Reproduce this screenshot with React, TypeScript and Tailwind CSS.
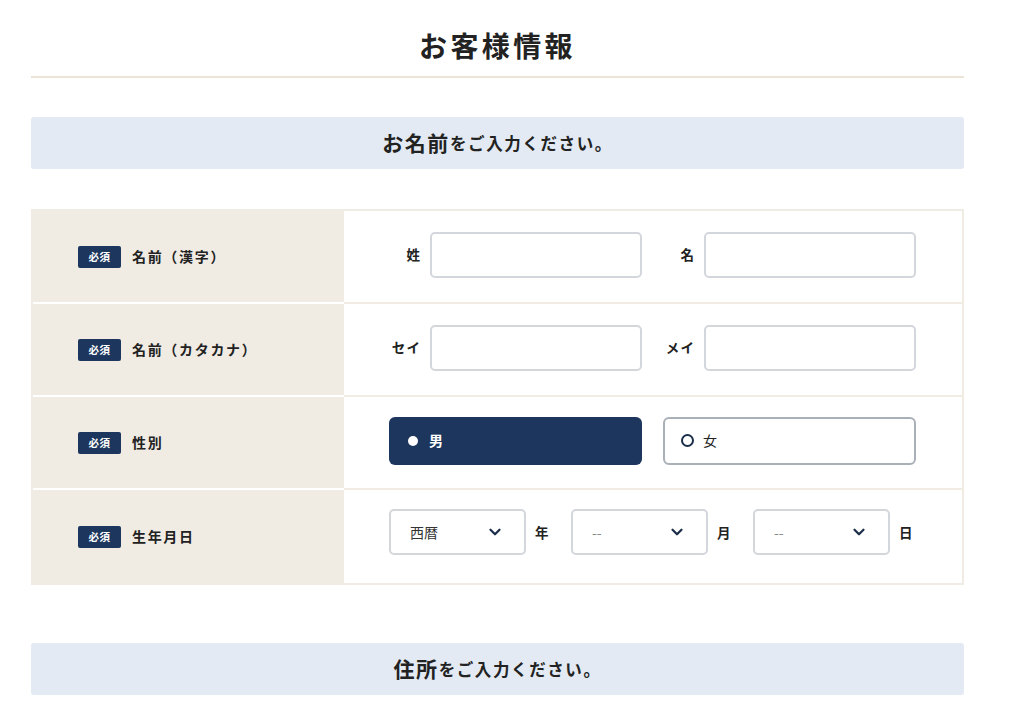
import { ChevronDown } from 'lucide-react';

const font = { fontFamily: "'Noto Sans CJK JP', 'Noto Sans', sans-serif" };

function Badge() {
  return (
    <span className="inline-flex items-center justify-center w-[43px] h-[22px] rounded-[2px] bg-[#1c365d] text-white text-[10.5px] font-bold tracking-[0.05em]">
      必須
    </span>
  );
}

function SectionHeader({ strong, rest }: { strong: string; rest: string }) {
  return (
    <div className="h-[52px] rounded-[3px] bg-[#e3eaf3] flex items-center justify-center text-[#222] font-bold tracking-[0.1em]">
      <span className="text-[21px]">{strong}</span>
      <span className="text-[16.5px]">{rest}</span>
    </div>
  );
}

function Row({ label, last, children }: { label: string; last?: boolean; children: React.ReactNode }) {
  return (
    <div className="flex h-[93px]">
      <div
        className={`w-[311px] bg-[#f0ece4] flex items-center pl-[45px] gap-[11px] ${last ? '' : 'border-b-2 border-white'}`}
      >
        <Badge />
        <span className="text-[14px] font-bold text-[#222] tracking-[0.12em]">{label}</span>
      </div>
      <div
        className={`flex-1 bg-white flex items-center pl-[45px] pr-[45px] ${last ? 'pb-[9px]' : 'pb-[4px] border-b-2 border-[#f0ece4]'}`}
      >
        {children}
      </div>
    </div>
  );
}

function NameField({ label }: { label: string }) {
  return (
    <div className="flex items-center w-[253px]">
      <span className="w-[32px] text-right text-[13.5px] font-bold text-[#222] tracking-[0.08em]">{label}</span>
      <div className="ml-[9px] w-[212px] h-[46px] rounded-[5px] border-2 border-[#d3d7dc] bg-white" />
    </div>
  );
}

function Select({ value, muted }: { value: string; muted?: boolean }) {
  return (
    <div className="w-[137px] h-[46px] rounded-[5px] border-2 border-[#d3d7dc] bg-white flex items-center justify-between pl-[19px] pr-[20px]">
      <span className={`text-[14px] ${muted ? 'text-[#8a8a8a]' : 'text-[#333]'}`}>{value}</span>
      <ChevronDown size={18} strokeWidth={3} className="text-[#1c2e4a]" />
    </div>
  );
}

function DateLabel({ text, last }: { text: string; last?: boolean }) {
  return (
    <span className={`ml-[9px] w-[14px] text-[13.5px] font-bold text-[#222] ${last ? '' : 'mr-[22px]'}`}>{text}</span>
  );
}

export default function App() {
  return (
    <div className="min-h-screen bg-white" style={font}>
      <div className="w-[933px] ml-[31px] pb-[20px]">
        <h1 className="pt-[25px] text-center text-[28px] leading-[40px] font-bold text-[#222] tracking-[0.12em]">
          お客様情報
        </h1>
        <div className="mt-[11px] h-[2px] bg-[#ebe4d7]" />

        <div className="mt-[39px]">
          <SectionHeader strong="お名前" rest="をご入力ください。" />
        </div>

        <div className="mt-[40px] border-2 border-[#f0ece4]">
          <Row label="名前（漢字）">
            <div className="flex gap-[21px]">
              <NameField label="姓" />
              <NameField label="名" />
            </div>
          </Row>
          <Row label="名前（カタカナ）">
            <div className="flex gap-[21px]">
              <NameField label="セイ" />
              <NameField label="メイ" />
            </div>
          </Row>
          <Row label="性別">
            <div className="flex gap-[21px]">
              <div className="w-[253px] h-[48px] rounded-[6px] bg-[#1c365d] flex items-center pl-[19px] gap-[11px]">
                <span className="w-[10px] h-[10px] rounded-full bg-white" />
                <span className="text-[14px] font-bold text-white">男</span>
              </div>
              <div className="w-[253px] h-[48px] rounded-[6px] border-2 border-[#a9b0b8] bg-white flex items-center pl-[16px] gap-[9px]">
                <span className="w-[13px] h-[13px] rounded-full border-2 border-[#1c2e4a]" />
                <span className="text-[14px] text-[#222]">女</span>
              </div>
            </div>
          </Row>
          <Row label="生年月日" last>
            <div className="flex items-center">
              <Select value="西暦" />
              <DateLabel text="年" />
              <Select value="--" muted />
              <DateLabel text="月" />
              <Select value="--" muted />
              <DateLabel text="日" last />
            </div>
          </Row>
        </div>

        <div className="mt-[58px]">
          <SectionHeader strong="住所" rest="をご入力ください。" />
        </div>
      </div>
    </div>
  );
}
